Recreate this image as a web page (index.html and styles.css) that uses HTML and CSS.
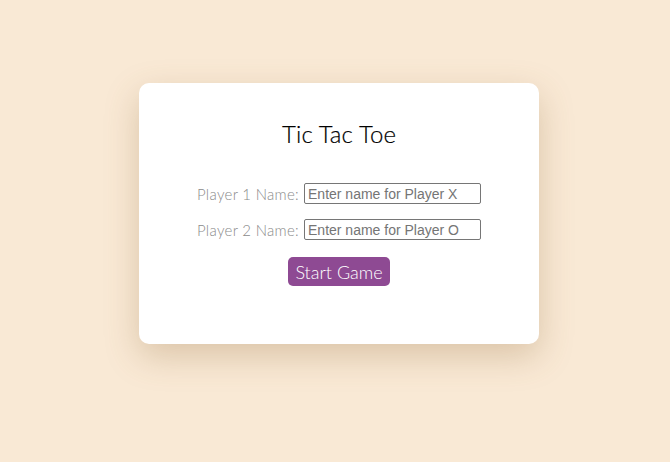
FILE: index.html
```html
<!DOCTYPE html>
<html>
<head>
<meta charset="utf-8">
<link rel="stylesheet" href="styles.css">
</head>
<body>
<main class="page">
  <section class="card">
    <h1 class="title">Tic Tac Toe</h1>
    <div class="row">
      <label class="label" for="p1">Player 1 Name:</label>
      <input class="field" id="p1" type="text" placeholder="Enter name for Player X">
    </div>
    <div class="row">
      <label class="label" for="p2">Player 2 Name:</label>
      <input class="field" id="p2" type="text" placeholder="Enter name for Player O">
    </div>
    <div class="actions">
      <button class="start">Start Game</button>
    </div>
  </section>
</main>
</body>
</html>
```
FILE: styles.css
```css
html, body {
  margin: 0;
  padding: 0;
  height: 100%;
  background: #f9e9d5;
}
.page {
  display: flex;
  justify-content: center;
  padding-top: 83px;
  padding-left: 8px;
}
.card {
  width: 400px;
  height: 261px;
  box-sizing: border-box;
  background: #fff;
  border-radius: 10px;
  box-shadow: 0 12px 34px rgba(140, 100, 50, 0.28);
  padding-top: 37px;
  text-align: center;
  font-family: "Lato", "Open Sans", sans-serif;
}
.title {
  margin: 0 0 35px;
  font-size: 24px;
  font-weight: 300;
  color: #000;
  line-height: 28px;
  letter-spacing: 0.1px;
  -webkit-text-stroke: 0.2px #000;
}
.row {
  display: flex;
  justify-content: center;
  align-items: center;
  gap: 5px;
  margin-bottom: 15px;
}
.label {
  font-size: 15px;
  font-weight: 300;
  color: #8a8a8a;
  letter-spacing: 0.3px;
}
.field {
  width: 177px;
  height: 21px;
  box-sizing: border-box;
  border: 1px solid #767676;
  border-radius: 2px;
  padding: 1px 3px;
  font-family: "Liberation Sans", Arial, sans-serif;
  font-size: 14px;
  color: #222;
}
.field::placeholder {
  color: #757575;
}
.actions {
  display: flex;
  justify-content: center;
  margin-top: 17px;
}
.start {
  width: 102px;
  height: 29px;
  border: none;
  border-radius: 5px;
  background: #8e4a93;
  color: #fff;
  font-family: "Lato", "Open Sans", sans-serif;
  font-size: 18px;
  font-weight: 300;
  padding: 0;
}
```
